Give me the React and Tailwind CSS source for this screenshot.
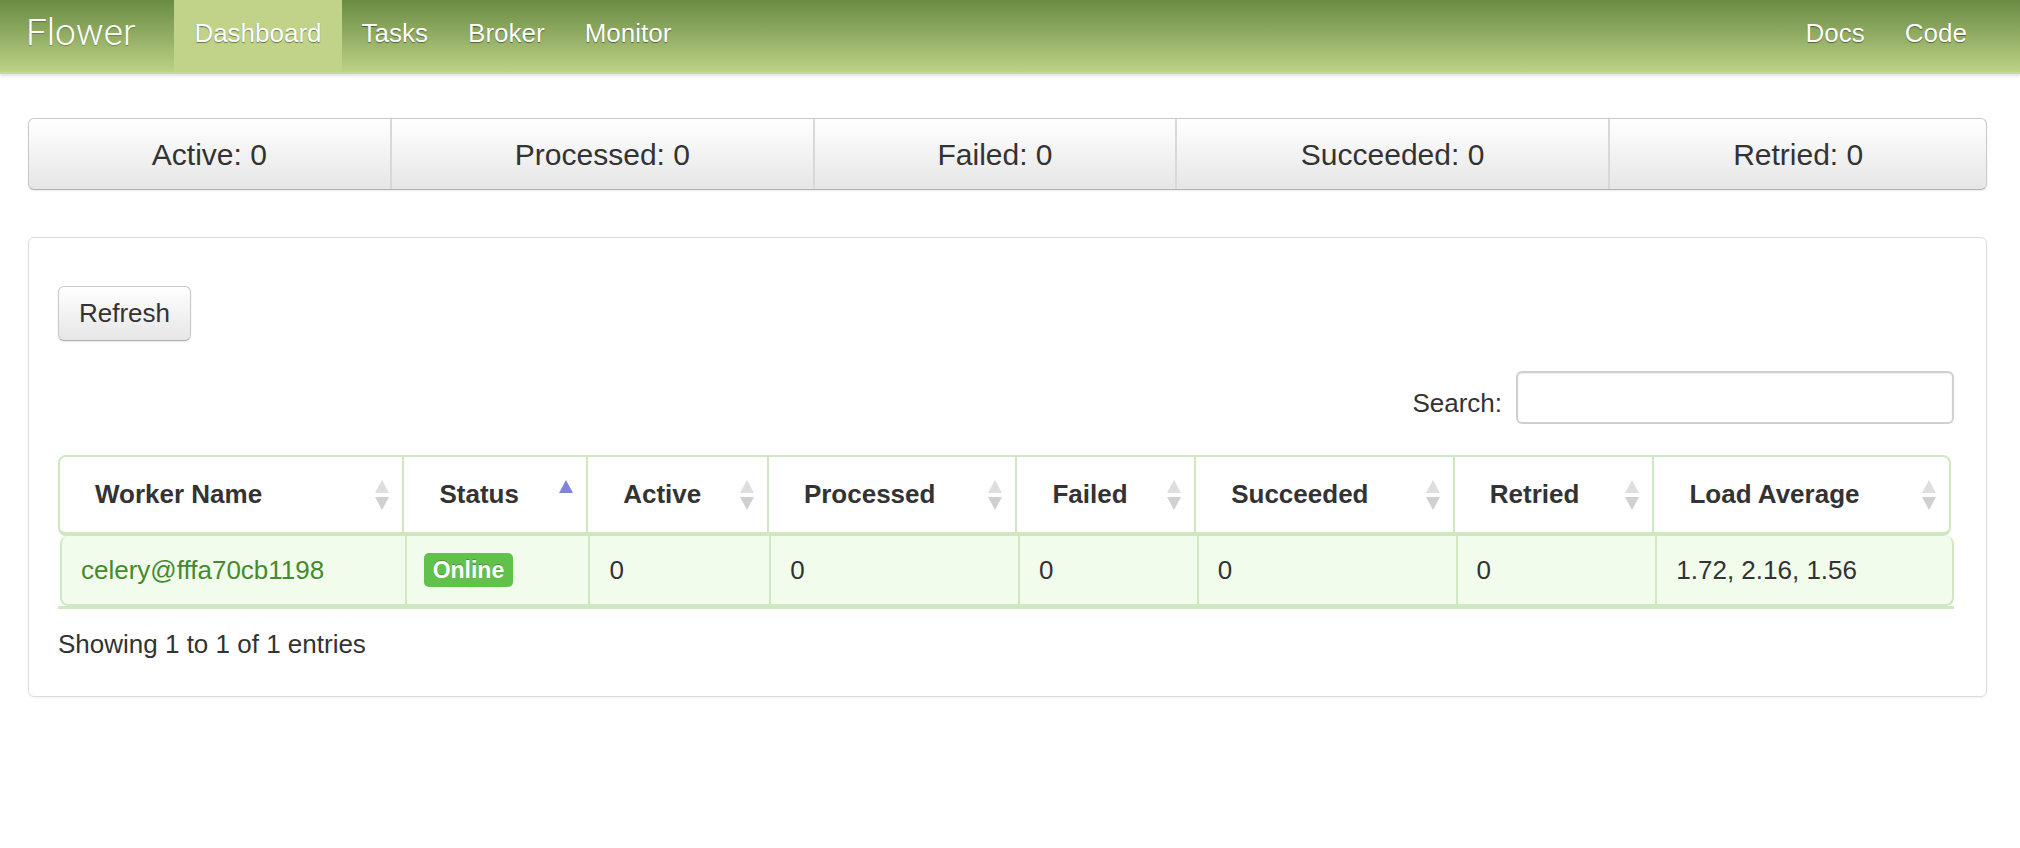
import React from "react";

const cols = [
  { name: "Worker Name", sort: "both" },
  { name: "Status", sort: "asc" },
  { name: "Active", sort: "both" },
  { name: "Processed", sort: "both" },
  { name: "Failed", sort: "both" },
  { name: "Succeeded", sort: "both" },
  { name: "Retried", sort: "both" },
  { name: "Load Average", sort: "both" },
];

const gridCols =
  "grid grid-cols-[343fr_184fr_181fr_249fr_179fr_259fr_200fr_297fr]";

function SortBoth() {
  return (
    <svg width="16" height="32" viewBox="0 0 16 32" className="shrink-0">
      <polygon points="8,1 15,14 1,14" fill="#dedede" />
      <polygon points="1,18 15,18 8,31" fill="#d0d0d0" />
    </svg>
  );
}

function SortAsc() {
  return (
    <svg width="16" height="32" viewBox="0 0 16 32" className="shrink-0">
      <polygon points="8,1 15,14 1,14" fill="#7f84d9" />
    </svg>
  );
}

const stats = ["Active: 0", "Processed: 0", "Failed: 0", "Succeeded: 0", "Retried: 0"];

export default function App() {
  return (
    <div className="min-h-[848px] bg-white font-['Liberation_Sans',Arial,sans-serif] text-[#333]">
      {/* Navbar */}
      <div className="flex h-[74px] border-b-2 border-[#c7da92] bg-gradient-to-b from-[#6a8b43] to-[#bcd286] pr-[33px] shadow-[0_2px_3px_rgba(0,0,0,0.12)]">
        <div className="flex items-center pl-[26px] pr-[39px] pb-[6px] font-['Roboto',sans-serif] text-[37px] font-light text-white [text-shadow:0_1px_1px_rgba(0,0,0,0.25)]">
          Flower
        </div>
        {["Dashboard", "Tasks", "Broker", "Monitor"].map((t) => (
          <div
            key={t}
            className={`flex items-center px-[20px] pb-[6px] text-[26px] text-white [text-shadow:0_1px_1px_rgba(0,0,0,0.45)] ${
              t === "Dashboard" ? "bg-[#c0d388]" : ""
            }`}
          >
            {t}
          </div>
        ))}
        <div className="ml-auto flex">
          {["Docs", "Code"].map((t) => (
            <div
              key={t}
              className="flex items-center px-[20px] pb-[6px] text-[26px] text-white [text-shadow:0_1px_1px_rgba(0,0,0,0.45)]"
            >
              {t}
            </div>
          ))}
        </div>
      </div>

      <div className="ml-[28px] mr-[33px] pt-[44px]">
        {/* Stats bar */}
        <div className="grid h-[72px] grid-cols-[361fr_424fr_362fr_434fr_378fr] overflow-hidden rounded-[6px] border border-[#cacaca] border-b-[#b3b3b3] bg-gradient-to-b from-white to-[#e6e6e6] shadow-[0_1px_2px_rgba(0,0,0,0.08)]">
          {stats.map((t, i) => (
            <div
              key={t}
              className={`flex items-center justify-center text-[30px] text-[#333] ${
                i > 0 ? "border-l-2 border-[#d8d8d8]" : ""
              }`}
            >
              {t}
            </div>
          ))}
        </div>

        {/* Panel */}
        <div className="mt-[47px] rounded-[6px] border border-[#dcdcdc] pl-[29px] pr-[32px] pt-[48px] pb-[32px] shadow-[0_1px_2px_rgba(0,0,0,0.06)]">
          <button className="h-[55px] w-[133px] rounded-[6px] border border-[#c8c8c8] border-b-[#b0b0b0] bg-gradient-to-b from-white to-[#e6e6e6] text-[26px] text-[#333] shadow-[0_1px_2px_rgba(0,0,0,0.1)]">
            Refresh
          </button>

          <div className="mt-[30px] flex items-center justify-end">
            <span className="mr-[14px] mt-[12px] text-[26px] text-[#333]">Search:</span>
            <div className="h-[53px] w-[438px] rounded-[6px] border-2 border-[#d0d0d0] bg-white shadow-[inset_0_1px_2px_rgba(0,0,0,0.08)]" />
          </div>

          {/* Table */}
          <div className="mt-[31px]">
            <div
              className={`${gridCols} h-[81px] mr-[3px] rounded-[8px] border-2 border-b-[4px] border-[#cfe8c1] bg-white`}
            >
              {cols.map((c, i) => (
                <div
                  key={c.name}
                  className={`flex items-center justify-between pl-[35px] pr-[12px] text-[26px] font-bold text-[#333] ${
                    i > 0 ? "border-l-2 border-[#cfe8c1]" : ""
                  }`}
                >
                  <span>{c.name}</span>
                  {c.sort === "asc" ? <SortAsc /> : <SortBoth />}
                </div>
              ))}
            </div>
            <div
              className={`${gridCols} ml-[2px] h-[70px] rounded-[8px] border-2 border-t-0 border-[#cfe8c1] bg-[#f1fcec] text-[26px] text-[#333]`}
            >
              <div className="flex items-center pl-[19px] text-[#468a2c]">celery@fffa70cb1198</div>
              <div className="flex items-center border-l-2 border-[#cfe8c1] pl-[17px]">
                <span className="flex h-[34px] items-center rounded-[5px] bg-[#62c14b] px-[9px] text-[23px] font-bold text-white [text-shadow:0_-1px_0_rgba(0,0,0,0.25)]">
                  Online
                </span>
              </div>
              <div className="flex items-center border-l-2 border-[#cfe8c1] pl-[19px]">0</div>
              <div className="flex items-center border-l-2 border-[#cfe8c1] pl-[19px]">0</div>
              <div className="flex items-center border-l-2 border-[#cfe8c1] pl-[19px]">0</div>
              <div className="flex items-center border-l-2 border-[#cfe8c1] pl-[19px]">0</div>
              <div className="flex items-center border-l-2 border-[#cfe8c1] pl-[19px]">0</div>
              <div className="flex items-center border-l-2 border-[#cfe8c1] pl-[19px]">1.72, 2.16, 1.56</div>
            </div>
            <div className="h-[3px] bg-[#cfe8c1]" />
          </div>

          <div className="mt-[16px] text-[26px] text-[#333]">Showing 1 to 1 of 1 entries</div>
        </div>
      </div>
    </div>
  );
}
